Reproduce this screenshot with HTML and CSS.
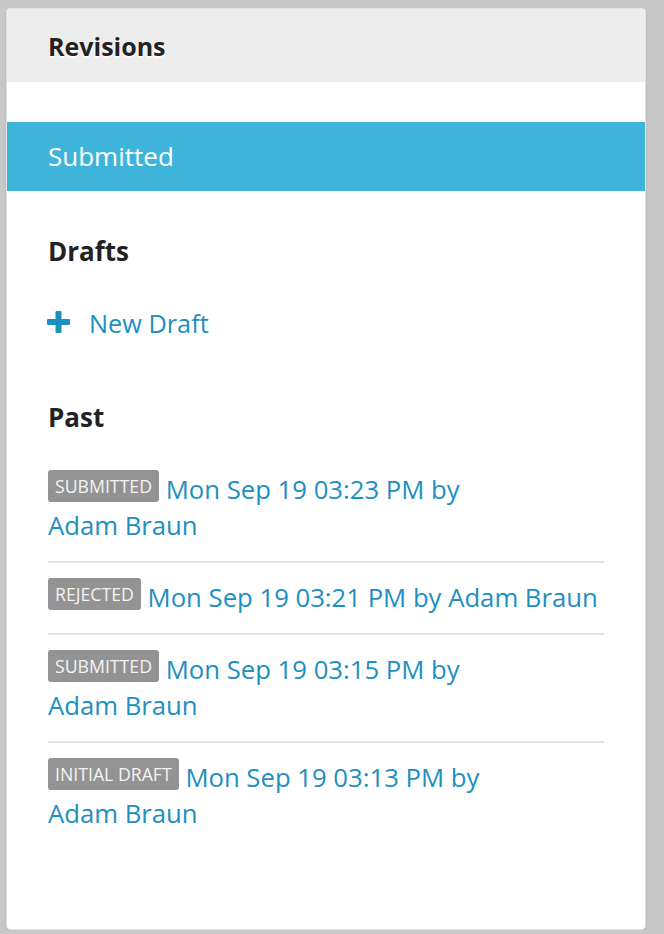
FILE: index.html
```html
<!DOCTYPE html>
<html>
<head>
<meta charset="utf-8">
<link rel="stylesheet" href="styles.css">
</head>
<body>
<div class="card">
  <div class="card-header">Revisions</div>
  <div class="current">Submitted</div>
  <div class="content">
    <h3 class="section-title drafts-title">Drafts</h3>
    <a class="new-draft" href="#">
      <svg class="plus" width="23" height="22" viewBox="0 0 23 22"><rect x="8.5" y="0" width="6" height="22" rx="1.2" fill="#1d8fc0"/><rect x="0" y="8" width="23" height="6" rx="1.2" fill="#1d8fc0"/></svg>
      <span>New Draft</span>
    </a>
    <h3 class="section-title past-title">Past</h3>
    <ul class="past-list">
      <li class="past-item"><span class="badge">Submitted</span> <a href="#">Mon Sep 19 03:23 PM by Adam&nbsp;Braun</a></li>
      <li class="past-item"><span class="badge">Rejected</span> <a href="#">Mon Sep 19 03:21 PM by Adam&nbsp;Braun</a></li>
      <li class="past-item"><span class="badge">Submitted</span> <a href="#">Mon Sep 19 03:15 PM by Adam&nbsp;Braun</a></li>
      <li class="past-item"><span class="badge">Initial Draft</span> <a href="#">Mon Sep 19 03:13 PM by Adam&nbsp;Braun</a></li>
    </ul>
  </div>
</div>
</body>
</html>
```
FILE: styles.css
```css
html, body {
  margin: 0;
  padding: 0;
  background: #c8c8c8;
}
body {
  font-family: "Open Sans", "Noto Sans", sans-serif;
  padding: 8px 18px 0 6px;
}
.card {
  background: #fff;
  border: 1px solid #e4e4e4;
  border-radius: 4px;
  height: 922px;
  box-sizing: border-box;
  box-shadow: 0 2px 2px rgba(0,0,0,0.18);
  overflow: hidden;
  width: 640px;
}
.card-header {
  background: #ededed;
  height: 73px;
  line-height: 74px;
  padding-left: 41px;
  font-size: 25px;
  font-weight: 700;
  color: #222;
  text-shadow: 0 1px 1px #fff, 0 2px 2px rgba(255,255,255,0.8);
}
.current {
  margin-top: 40px;
  background: #3fb4da;
  height: 69px;
  line-height: 69px;
  padding-left: 41px;
  font-size: 26px;
  color: #fff;
  font-weight: 400;
}
.content {
  padding: 0 40px 0 41px;
}
.section-title {
  margin: 0;
  font-size: 26px;
  font-weight: 700;
  line-height: 30px;
  color: #222;
}
.drafts-title {
  margin-top: 45px;
}
.new-draft {
  display: flex;
  align-items: center;
  margin-top: 39px;
  height: 36px;
  color: #1d8fc0;
  text-decoration: none;
  font-size: 25.3px;
}
.plus {
  margin-left: -1px;
  margin-right: 19px;
  margin-top: -3px;
}
.past-title {
  margin-top: 61px;
}
.past-list {
  list-style: none;
  margin: 23px 0 0;
  padding: 0;
  width: 556px;
}
.past-item {
  padding: 17px 0;
  font-size: 25.7px;
  line-height: 36px;
}
.past-item + .past-item {
  border-top: 2px solid #e3e3e3;
}
.past-item a {
  color: #1d8fc0;
  text-decoration: none;
}
.badge {
  display: inline-block;
  background: #939393;
  color: #f4f4f4;
  text-transform: uppercase;
  font-size: 17.7px;
  line-height: 32px;
  padding: 0 7px;
  margin-top: -8px;
  border-radius: 3px;
  vertical-align: 6px;
}
```
